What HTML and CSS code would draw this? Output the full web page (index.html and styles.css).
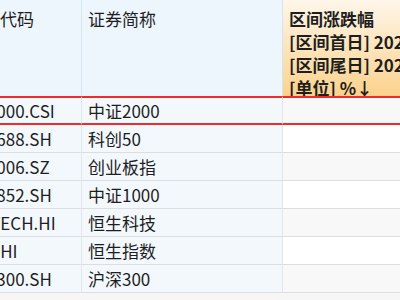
FILE: index.html
```html
<!DOCTYPE html>
<html lang="zh-CN">
<head>
<meta charset="utf-8">
<title>区间涨跌幅</title>
<link rel="stylesheet" href="styles.css">
</head>
<body>
<div class="viewport">
  <table class="grid">
    <colgroup>
      <col class="c-code">
      <col class="c-name">
      <col class="c-chg">
    </colgroup>
    <thead>
      <tr>
        <th class="h-blue"><div class="hcell first">证券代码</div></th>
        <th class="h-blue"><div class="hcell">证券简称</div></th>
        <th class="h-orange"><div class="hcell bold">区间涨跌幅<br>[区间首日] 2024-01-02<br>[区间尾日] 2024-06-28<br>[单位] %↓</div></th>
      </tr>
    </thead>
    <tbody>
      <tr class="sel odd"><td class="fix">932000.CSI</td><td class="fix">中证2000</td><td class="val"></td></tr>
      <tr><td class="fix">000688.SH</td><td class="fix">科创50</td><td class="val"></td></tr>
      <tr class="odd"><td class="fix">399006.SZ</td><td class="fix">创业板指</td><td class="val"></td></tr>
      <tr><td class="fix">000852.SH</td><td class="fix">中证1000</td><td class="val"></td></tr>
      <tr class="odd"><td class="fix">HSTECH.HI</td><td class="fix">恒生科技</td><td class="val"></td></tr>
      <tr><td class="fix">HSI.HI</td><td class="fix">恒生指数</td><td class="val"></td></tr>
      <tr class="odd"><td class="fix">000300.SH</td><td class="fix">沪深300</td><td class="val"></td></tr>
    </tbody>
  </table>
</div>
</body>
</html>
```

FILE: styles.css
```css
html, body {
  margin: 0;
  padding: 0;
  background: #ffffff;
}

.viewport {
  width: 400px;
  height: 300px;
  overflow: hidden;
  background: #f6f6f6;
}

.grid {
  margin-left: -38px;
  border-collapse: separate;
  border-spacing: 0;
  table-layout: fixed;
  width: 680px;
  font-family: "Noto Sans CJK SC", "Noto Sans", sans-serif;
  font-size: 17px;
  color: #1e1e1e;
}

.c-code { width: 120px; }
.c-name { width: 201px; }
.c-chg { width: 359px; }

th {
  padding: 0;
  text-align: left;
  vertical-align: top;
  font-weight: normal;
}

.hcell {
  height: 96px;
  box-sizing: border-box;
  padding: 7px 6px 0;
  line-height: 23px;
  overflow: hidden;
  white-space: nowrap;
}

.hcell.first {
  padding-left: 4px;
}

.bold {
  font-weight: bold;
}

.h-blue {
  background: #edf5fd;
  border-right: 1px solid #d6e4f2;
}

.h-orange {
  background: linear-gradient(#fef6ea, #fbd28c);
}

td {
  height: 27px;
  padding: 0 6px;
  line-height: 20px;
  white-space: nowrap;
  overflow: hidden;
  border-bottom: 1px solid #dedede;
}

td.fix {
  background: #f3f8fd;
  border-right: 1px solid #e1e6ec;
}

td.val {
  background: #ffffff;
}

tr.odd td.val {
  background: #f8f8f8;
}

tr.sel td {
  height: 25px;
  border-top: 2px solid #f22a2a;
  border-bottom: 2px solid #f22a2a;
}
```
